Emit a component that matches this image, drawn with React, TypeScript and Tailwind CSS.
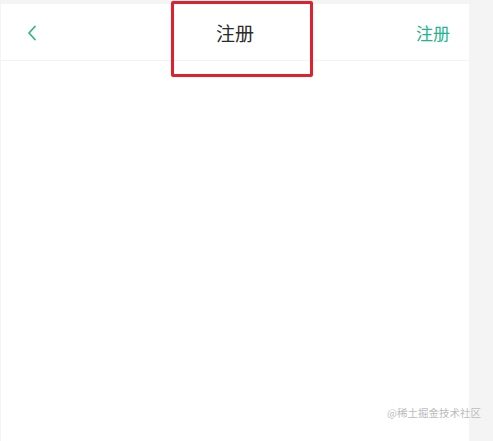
const App = () => {
  return (
    <div className="relative h-[441px] w-[493px] overflow-hidden bg-[#f4f4f4] pt-[4px] pl-[1px] font-['Noto_Sans_CJK_SC',sans-serif]">
      <div className="h-[437px] w-[468px] bg-white">
        {/* Header */}
        <div className="relative flex h-[57px] items-center justify-between border-b border-[#f3f3f3] pl-[26px] pr-[19px]">
          <svg width="10" height="16" viewBox="0 0 10 16" className="mt-[2px]">
            <path d="M8 1.5 L2 8 L8 14.5" fill="none" stroke="#36b38e" strokeWidth="1.8" strokeLinecap="round" strokeLinejoin="round" />
          </svg>
          <span className="absolute left-1/2 top-[16px] -translate-x-1/2 text-[19px] leading-[26px] text-[#2b2b2b]">注册</span>
          <span className="mt-[1px] text-[17px] leading-[22px] text-[#22b38f]">注册</span>
        </div>
      </div>

      {/* highlight box */}
      <div className="absolute left-[171px] top-[1px] h-[76px] w-[142px] rounded-[2px] border-[3px] border-[#e0202c]" />

      {/* watermark */}
      <span className="absolute left-[387px] top-[405px] whitespace-nowrap text-[10.5px] leading-[16px] text-[#bcbcbc]">@稀土掘金技术社区</span>
    </div>
  );
};

export default App;
